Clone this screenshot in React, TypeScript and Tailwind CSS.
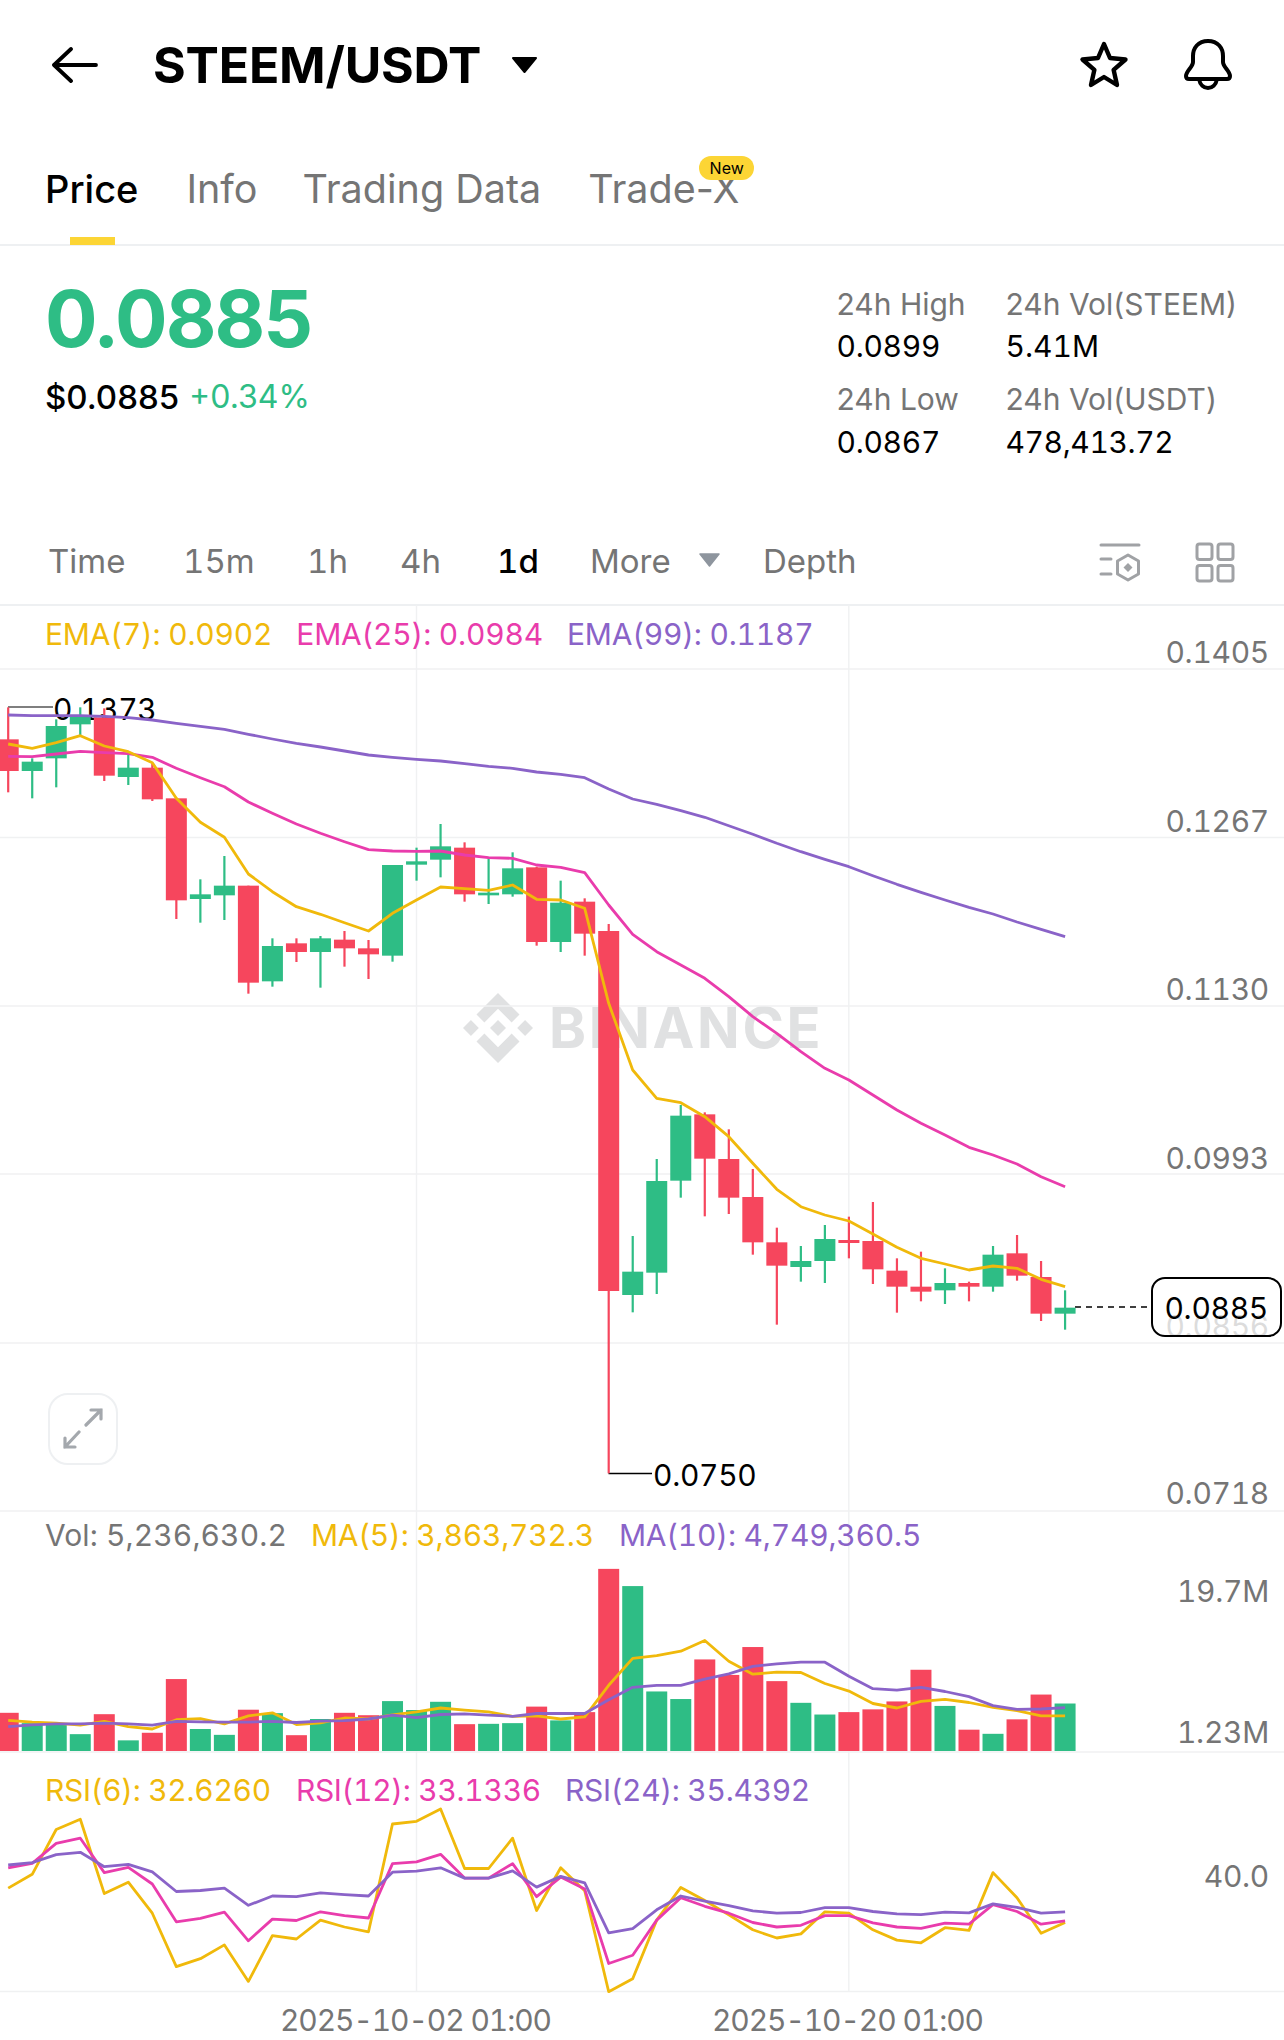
import React from "react";

const RED = "#F6465D";
const GREEN = "#2EBD85";
const YEL = "#F0B90B";
const PINK = "#E93CAC";
const PUR = "#8A63C8";

const X = (i: number) => 8.2 + 24.02 * i;
const yM = (v: number) => 600 + v / 3;
const yV = (v: number) => 1500 + v / 2.904;
const O = 1380;

type C = [string, number, number, number, number];
const cA: C[] = [
  ["r", 322, 418, 513, 577], ["g", 475, 485, 513, 595], ["g", 358, 378, 475, 562], ["g", 322, 345, 373, 405],
  ["r", 325, 352, 527, 543], ["g", 465, 503, 531, 555], ["r", 490, 503, 598, 603], ["r", 595, 595, 901, 957],
  ["g", 838, 883, 897, 968], ["g", 768, 857, 886, 960], ["r", 857, 857, 1148, 1181], ["g", 1015, 1038, 1144, 1160],
  ["r", 1015, 1030, 1056, 1086], ["g", 1008, 1015, 1056, 1163], ["r", 993, 1019, 1045, 1100], ["r", 1020, 1045, 1063, 1137],
  ["g", 795, 795, 1067, 1085], ["g", 743, 784, 794, 842], ["g", 672, 739, 779, 832], ["r", 727, 743, 883, 905],
  ["g", 775, 878, 886, 912], ["g", 757, 805, 883, 890], ["r", 800, 802, 1026, 1037], ["g", 842, 908, 1026, 1056],
  ["r", 895, 905, 1001, 1067], ["r", 972, 993, 2073, 2620],
];
const cB: C[] = ([
  ["g", 528, 635, 705, 757], ["g", 297, 363, 638, 702], ["g", 135, 167, 362, 413], ["r", 157, 163, 296, 469],
  ["r", 208, 297, 413, 462], ["r", 327, 411, 547, 584], ["r", 503, 547, 617, 794], ["g", 558, 603, 621, 665],
  ["g", 495, 537, 603, 669], ["r", 470, 540, 549, 595], ["r", 426, 543, 628, 672], ["r", 595, 632, 680, 758],
  ["r", 575, 680, 695, 724], ["g", 625, 669, 691, 732], ["r", 665, 669, 680, 724], ["g", 558, 584, 680, 695],
  ["r", 525, 580, 647, 662], ["r", 603, 651, 761, 783], ["g", 691, 743, 761, 809],
] as C[]).map((c) => [c[0], c[1] + O, c[2] + O, c[3] + O, c[4] + O] as C);
const candles = [...cA, ...cB];

const ema7 = [432, 445, 428, 407, 438, 455, 488, 595, 667, 712, 822, 875, 920, 943, 968, 993, 940, 900, 861, 866, 871, 855, 898, 900, 925, 1210,
  30 + O, 115 + O, 128 + O, 170 + O, 230 + O, 310 + O, 388 + O, 440 + O, 465 + O, 483 + O, 522 + O, 562 + O, 595 + O, 612 + O, 630 + O, 618 + O, 625 + O, 658 + O, 680 + O];
const ema25 = [469, 470, 462, 454, 458, 461, 472, 505, 533, 560, 606, 640, 672, 700, 725, 749, 753, 754, 753, 765, 773, 775, 795, 802, 818, 915, 1003,
  1055, 1095, 1135, 1190, 1250, 1300, 1355, 25 + O, 60 + O, 105 + O, 150 + O, 190 + O, 225 + O, 262 + O, 285 + O, 312 + O, 350 + O, 380 + O];
const ema99 = [345, 347, 347, 347, 349, 353, 360, 370, 379, 388, 403, 417, 430, 441, 453, 465, 472, 478, 483, 491, 499, 505, 516, 523, 533, 567, 597,
  613, 632, 652, 677, 703, 730, 755, 778, 800, 827, 853, 877, 900, 922, 942, 966, 988, 1010];

const vols: [string, number][] = [
  ["r", 618], ["g", 648], ["g", 650], ["g", 680], ["r", 622], ["g", 698], ["r", 676], ["r", 520], ["g", 665], ["g", 682], ["r", 609], ["g", 619],
  ["r", 683], ["g", 636], ["r", 618], ["r", 625], ["g", 584], ["g", 610], ["g", 586], ["r", 651], ["g", 650], ["g", 648], ["r", 600], ["g", 640],
  ["r", 616], ["r", 200], ["g", 250], ["g", 556], ["g", 578], ["r", 463], ["r", 508], ["r", 427], ["r", 526], ["g", 589], ["g", 623], ["r", 616],
  ["r", 608], ["r", 585], ["r", 493], ["g", 598], ["r", 667], ["g", 679], ["r", 637], ["r", 565], ["g", 591],
];
const ma5 = [640, 645, 648, 654, 643, 658, 665, 638, 635, 650, 627, 618, 652, 647, 633, 636, 624, 615, 604, 610, 615, 628, 627, 636, 630, 538, 460,
  452, 439, 408, 468, 506, 500, 501, 533, 555, 591, 604, 585, 579, 588, 602, 612, 627, 627];
const ma10 = [658, 653, 650, 650, 648, 650, 654, 643, 644, 645, 645, 643, 646, 642, 641, 636, 625, 632, 623, 621, 625, 628, 620, 620, 620, 580, 544,
  538, 538, 520, 505, 483, 476, 471, 471, 512, 548, 552, 544, 556, 571, 597, 608, 607, 603];
const rsi6 = [1127, 1087, 957, 927, 1143, 1110, 1200, 1355, 1332, 1292, 1398, 1265, 1275, 1220, 1240, 1254, 941, 933, 897, 1070, 1070, 982, 1192, 1068, 1135, 1428, 1390,
  1220, 1125, 1163, 1205, 1248, 1272, 1260, 1196, 1200, 1248, 1278, 1286, 1242, 1250, 1082, 1155, 1258, 1227];
const rsi12 = [1068, 1055, 997, 982, 1082, 1067, 1115, 1225, 1215, 1197, 1280, 1217, 1221, 1196, 1207, 1214, 1056, 1051, 1029, 1098, 1098, 1056, 1152, 1095, 1130, 1346, 1322,
  1220, 1155, 1180, 1200, 1227, 1240, 1235, 1207, 1207, 1228, 1240, 1244, 1229, 1232, 1175, 1195, 1232, 1222];
const rsi24 = [1060, 1053, 1030, 1023, 1065, 1058, 1080, 1137, 1134, 1127, 1177, 1150, 1152, 1141, 1146, 1150, 1081, 1078, 1068, 1098, 1098, 1077, 1124, 1093, 1112, 1257, 1245,
  1190, 1150, 1165, 1178, 1193, 1200, 1198, 1184, 1184, 1195, 1202, 1204, 1197, 1199, 1173, 1183, 1200, 1196];

const pts = (a: number[], f: (v: number) => number) => a.map((v, i) => `${X(i).toFixed(1)},${f(v).toFixed(1)}`).join(" ");

function Line({ a, f, c }: { a: number[]; f: (v: number) => number; c: string }) {
  return <polyline points={pts(a, f)} fill="none" stroke={c} strokeWidth={2.8} strokeLinejoin="round" />;
}

function ChartSvg() {
  const hs = [669, 837.5, 1006, 1174, 1343, 1511, 1752, 1991.5];
  return (
    <svg className="absolute left-0 top-0" width={1284} height={1435} viewBox="0 605 1284 1435">
      {hs.map((y) => (
        <line key={y} x1={0} x2={1284} y1={y} y2={y} stroke="#F0F1F2" strokeWidth={1.6} />
      ))}
      <line x1={416.5} x2={416.5} y1={605} y2={1991} stroke="#F0F1F2" strokeWidth={1.4} />
      <line x1={848.8} x2={848.8} y1={605} y2={1991} stroke="#F0F1F2" strokeWidth={1.4} />
      <path d="M8 707 H53" stroke="#000" strokeWidth={1.2} fill="none" />
      <path d="M608.5 1473.500 H652" stroke="#000" strokeWidth={1.4} fill="none" />
      <path d="M1075 1307 H1151" stroke="#000" strokeWidth={1.4} strokeDasharray="6 5" fill="none" />
      {candles.map((c, i) => {
        const col = c[0] === "r" ? RED : GREEN;
        return (
          <g key={i}>
            <rect x={X(i) - 1.1} width={2.2} y={yM(c[1])} height={yM(c[4]) - yM(c[1])} fill={col} />
            <rect x={X(i) - 10.5} width={21} y={yM(c[2])} height={Math.max(2, yM(c[3]) - yM(c[2]))} fill={col} />
          </g>
        );
      })}
      <Line a={ema99} f={yM} c={PUR} />
      <Line a={ema25} f={yM} c={PINK} />
      <Line a={ema7} f={yM} c={YEL} />
      {vols.map((v, i) => (
        <rect key={i} x={X(i) - 10.5} width={21} y={yV(v[1])} height={1751 - yV(v[1])} fill={v[0] === "r" ? RED : GREEN} />
      ))}
      <Line a={ma5} f={yV} c={YEL} />
      <Line a={ma10} f={yV} c={PUR} />
      <Line a={rsi6} f={yV} c={YEL} />
      <Line a={rsi12} f={yV} c={PINK} />
      <Line a={rsi24} f={yV} c={PUR} />
    </svg>
  );
}

function BinanceLogo() {
  return (
    <svg width={70} height={70} viewBox="0 0 126.6 126.6" fill="#E0E1E2">
      <path d="M38.7 53.2 63.3 28.6l24.6 24.6 14.3-14.3L63.3 0 24.4 38.9z" />
      <path d="M0 63.3 14.3 49l14.3 14.3-14.3 14.3z" />
      <path d="M38.7 73.4 63.3 98l24.6-24.6 14.3 14.3-38.9 38.9-38.9-38.9z" />
      <path d="M98 63.3 112.3 49l14.3 14.3-14.3 14.3z" />
      <path d="M77.8 63.3 63.3 48.8 52.6 59.5l-1.2 1.2-2.5 2.6 14.4 14.5z" />
    </svg>
  );
}

function AxisLabel({ top, children }: { top: number; children: React.ReactNode }) {
  return (
    <span className="absolute right-[15px] text-[30px] leading-[36px] tabular-nums tracking-[-0.3px] text-[#757575]" style={{ top }}>
      {children}
    </span>
  );
}

export default function App() {
  return (
    <div className="w-[1284px] h-[2040px] bg-white overflow-hidden font-['Inter','Noto_Sans',sans-serif] text-black">
      {/* Header */}
      <header className="h-[130px] flex items-center pl-[52px] pr-[52px]">
        <svg width={46} height={36} viewBox="0 0 46 36" fill="none" stroke="#000" strokeWidth={3.8} strokeLinecap="round" strokeLinejoin="round">
          <path d="M2 18H44M19 2 2 18l17 16" />
        </svg>
        <h1 className="ml-[55px] text-[50px] leading-[56px] font-bold tracking-[-0.2px]">STEEM/USDT</h1>
        <svg className="ml-[30px]" width={27} height={17} viewBox="0 0 27 17">
          <path d="M2 1H25L13.500 15Z" fill="#000" stroke="#000" strokeWidth={2} strokeLinejoin="round" />
        </svg>
        <div className="ml-auto flex items-center gap-[54px]">
          <svg width={52} height={50} viewBox="0 0 52 50" fill="none" stroke="#000" strokeWidth={4.4} strokeLinejoin="round">
            <path d="M26 4 32 18 47.500 19.500 35.600 29.800 39 45 26 37 13 45 16.400 29.800 4.500 19.500 20 18Z" />
          </svg>
          <svg width={48} height={52} viewBox="0 0 48 52" fill="none" stroke="#000" strokeWidth={4} strokeLinejoin="round" strokeLinecap="round">
            <path d="M24 2C14 2 9 9 9 17V23C9 28 2 32 2 37C2 39 3 40 5 40H43C45 40 46 39 46 37C46 32 39 28 39 23V17C39 9 34 2 24 2Z" />
            <path d="M15 40C16 46 20 49 24 49C28 49 32 46 33 40" />
          </svg>
        </div>
      </header>

      {/* Tabs */}
      <nav className="relative h-[116px] border-b-[2px] border-[#EEF0F2] flex pl-[45px] pt-[36px] text-[39.5px] leading-[46px] text-[#757575]">
        <span className="relative text-[38px] font-medium text-black">
          Price
          <span className="absolute left-[25px] top-[71px] w-[45px] h-[8px] bg-[#FCD535]" />
        </span>
        <span className="ml-[48px]">Info</span>
        <span className="ml-[45px]">Trading Data</span>
        <span className="relative ml-[47px]">
          Trade-X
          <span className="absolute left-[111px] -top-[10px] w-[55px] h-[24px] rounded-full bg-[#FCD535] text-[16px] leading-[24px] text-black text-center">
            New
          </span>
        </span>
      </nav>

      {/* Price stats */}
      <section className="h-[274px] flex justify-between pl-[45px] pr-[47px] pt-[28px]">
        <div>
          <div className="text-[78px] leading-[90px] font-bold text-[#2EBD85] tracking-[-2px]">0.0885</div>
          <div className="mt-[13px] flex gap-[10px] text-[33px] leading-[40px]">
            <span className="font-medium">$0.0885</span>
            <span className="text-[32px] text-[#2EBD85]">+0.34%</span>
          </div>
        </div>
        <div className="flex gap-[38px] text-[30px] leading-[42px] pt-[9px]">
          <div className="w-[131px]">
            <div className="text-[#757575]">24h High</div>
            <div className="tabular-nums tracking-[-0.3px]">0.0899</div>
            <div className="mt-[11px] text-[#757575]">24h Low</div>
            <div className="tabular-nums tracking-[-0.3px] mt-[1px]">0.0867</div>
          </div>
          <div>
            <div className="text-[#757575]">24h Vol(STEEM)</div>
            <div className="tabular-nums">5.41M</div>
            <div className="mt-[11px] text-[#757575]">24h Vol(USDT)</div>
            <div className="tabular-nums tracking-[-0.4px] mt-[1px]">478,413.72</div>
          </div>
        </div>
      </section>

      {/* Timeframes */}
      <div className="h-[86px] border-b-[2px] border-[#EEF0F2] flex items-center pl-[48px] pr-[49px] pb-[2px] text-[33px] leading-[40px] text-[#757575] tabular-nums">
        <span className="w-[135px]">Time</span>
        <span className="w-[124px]">15m</span>
        <span className="w-[93px]">1h</span>
        <span className="w-[97px]">4h</span>
        <span className="w-[93px] font-medium text-black">1d</span>
        <span className="w-[109px]">More</span>
        <svg className="mt-[-2px]" width={21} height={14} viewBox="0 0 21 14">
          <path d="M1 1H20L10.500 13Z" fill="#8E959E" stroke="#8E959E" strokeWidth={1.5} strokeLinejoin="round" />
        </svg>
        <span className="ml-[43px]">Depth</span>
        <div className="ml-auto mt-[2px] flex items-center gap-[54px]">
          <svg width={42} height={40} viewBox="0 0 42 40" fill="none" stroke="#A0A2A5" strokeWidth={3} strokeLinecap="round" strokeLinejoin="round">
            <path d="M2 3H40M2 17H12M2 32H12" />
            <path d="M29 13 39.500 19V32L29 38 18.500 32V19Z" />
            <path d="M29 21 33.500 25.500 29 30 24.500 25.500Z" fill="#A0A2A5" stroke="none" />
          </svg>
          <svg width={40} height={41} viewBox="0 0 40 41" fill="none" stroke="#A0A2A5" strokeWidth={3} strokeLinejoin="round">
            <rect x={2} y={2} width={15} height={15.500} rx={2.500} />
            <rect x={23} y={2} width={15} height={15.500} rx={2.500} />
            <rect x={2} y={23.500} width={15} height={15.500} rx={2.500} />
            <rect x={23} y={23.500} width={15} height={15.500} rx={2.500} />
          </svg>
        </div>
      </div>

      {/* Chart */}
      <div className="relative -mt-[1px] h-[1435px]">
        <span className="absolute left-[53px] top-[86px] text-[30px] leading-[36px] tabular-nums tracking-[-0.3px]">0.1373</span>
        <div className="absolute left-[463px] top-[388px] flex items-center gap-[16px]">
          <BinanceLogo />
          <span className="text-[56px] leading-[64px] font-bold text-[#E0E1E2] tracking-[2.7px]">BINANCE</span>
        </div>
        <ChartSvg />
        <span className="absolute left-[653px] top-[852px] text-[30px] leading-[36px] tabular-nums tracking-[-0.3px]">0.0750</span>

        <div className="relative h-[906px]">
          <div className="relative flex gap-[24px] pl-[45px] pt-[11px] text-[30px] leading-[36px] tabular-nums tracking-[-0.2px]">
            <span className="text-[#F0B90B]">EMA(7): 0.0902</span>
            <span className="text-[#E93CAC]">EMA(25): 0.0984</span>
            <span className="text-[#8A63C8]">EMA(99): 0.1187</span>
          </div>
          <AxisLabel top={29}>0.1405</AxisLabel>
          <AxisLabel top={198}>0.1267</AxisLabel>
          <AxisLabel top={366}>0.1130</AxisLabel>
          <AxisLabel top={535}>0.0993</AxisLabel>
          <AxisLabel top={703}>0.0856</AxisLabel>
          <AxisLabel top={870}>0.0718</AxisLabel>
          <div className="absolute left-[1151px] top-[672px] w-[131px] h-[60px] rounded-[14px] border-[2px] border-black bg-white/75 flex items-center justify-end pr-[12px] pt-[2px] text-[30px] leading-[36px] tabular-nums tracking-[-0.3px]">
            0.0885
          </div>
          <div className="absolute left-[48px] top-[788px] w-[70px] h-[72px] rounded-[20px] border-[2.5px] border-[#EEF0F2] flex items-center justify-center">
            <svg width={42} height={42} viewBox="0 0 42 42" fill="none" stroke="#A4A8AD" strokeWidth={3.2} strokeLinecap="round">
              <path d="M24 17 39 2M29 2H39V11M17 24 3 39M3 30V39H13" />
            </svg>
          </div>
        </div>

        <div className="relative h-[241px]">
          <div className="relative flex pl-[45px] pt-[6px] text-[30px] leading-[36px] tabular-nums">
            <span className="text-[#757575] tracking-[0.1px]">Vol: 5,236,630.2</span>
            <span className="ml-[24px] text-[#F0B90B] tracking-[-0.2px]">MA(5): 3,863,732.3</span>
            <span className="ml-[25px] text-[#8A63C8] tracking-[-0.2px]">MA(10): 4,749,360.5</span>
          </div>
          <AxisLabel top={62}>19.7M</AxisLabel>
          <AxisLabel top={203}>1.23M</AxisLabel>
        </div>

        <div className="relative h-[239px]">
          <div className="relative flex pl-[45px] pt-[20px] text-[30px] leading-[36px] tabular-nums tracking-[-0.3px]">
            <span className="text-[#F0B90B]">RSI(6): 32.6260</span>
            <span className="ml-[25px] text-[#E93CAC]">RSI(12): 33.1336</span>
            <span className="ml-[24px] text-[#8A63C8]">RSI(24): 35.4392</span>
          </div>
          <AxisLabel top={106}>40.0</AxisLabel>
        </div>

        <div className="relative text-[30px] leading-[36px] text-[#757575] tabular-nums tracking-[-1.1px]">
          <span className="absolute left-[280px] top-[11px]">2025-10-02 01:00</span>
          <span className="absolute left-[712px] top-[11px]">2025-10-20 01:00</span>
        </div>
      </div>
    </div>
  );
}
